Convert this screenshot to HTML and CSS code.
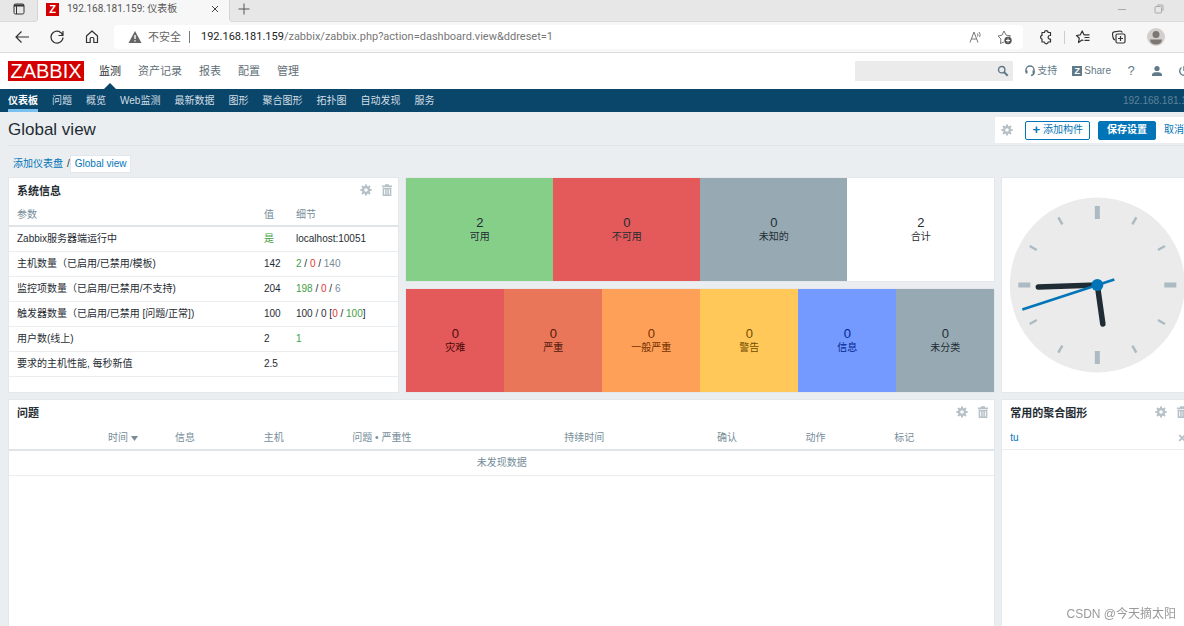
FILE: index.html
```html
<!DOCTYPE html>
<html lang="zh-CN">
<head>
<meta charset="utf-8">
<title>192.168.181.159: 仪表板</title>
<link rel="stylesheet" href="styles.css">
</head>
<body>
<svg class="defs" aria-hidden="true">
  <symbol id="gear" viewBox="0 0 12 12">
    <g fill="none" stroke="currentColor">
      <circle cx="6" cy="6" r="2.900" stroke-width="2.200"/>
      <path stroke-width="2" d="M6 0.4V2.5M6 9.5v2.1M0.4 6h2.1M9.5 6h2.1M2 2l1.6 1.6M8.4 8.4L10 10M2 10l1.6-1.6M8.4 3.6L10 2"/>
    </g>
  </symbol>
  <symbol id="trash" viewBox="0 0 12 12">
    <path fill="none" stroke="currentColor" stroke-width="1.5" d="M1 2.2h10M4 1h4M2.4 3.5v7.7h7.2V3.5M2.4 4.4h7.2M4.9 5v5.500M7.100 5v5.500"/>
  </symbol>
</svg>

<div class="browser">
  <div class="tabstrip">
    <button class="tab-actions" aria-label="标签操作">
      <svg width="12" height="12" viewBox="0 0 12 12" fill="none" stroke="#333"><rect x="1" y="1" width="10" height="10" rx="1.500"/><path stroke-width="2" d="M1 2.500h10"/><path d="M3.500 3v8"/></svg>
    </button>
    <div class="tab">
      <span class="favicon">Z</span>
      <span class="tab-title">192.168.181.159: 仪表板</span>
      <button class="tab-close" aria-label="关闭标签"><svg width="8" height="8" viewBox="0 0 8 8" stroke="#444"><path d="M1 1l6 6M7 1l-6 6"/></svg></button>
    </div>
    <button class="new-tab" aria-label="新建标签"><svg width="12" height="12" viewBox="0 0 12 12" stroke="#555"><path d="M6 0.500v11M0.500 6h11"/></svg></button>
    <div class="window-buttons">
      <button aria-label="最小化"><svg width="10" height="10" viewBox="0 0 10 10" stroke="#aaa"><path d="M1 5.500h8"/></svg></button>
      <button aria-label="还原"><svg width="10" height="10" viewBox="0 0 10 10" fill="none" stroke="#aaa"><rect x="1" y="2.500" width="6.500" height="6.500" rx="1"/><path d="M3 1h5a1 1 0 0 1 1 1v5"/></svg></button>
    </div>
  </div>
  <div class="toolbar">
    <div class="nav-buttons">
      <button aria-label="后退"><svg width="16" height="16" viewBox="0 0 16 16" fill="none" stroke="#333" stroke-width="1.200"><path d="M15 8H2M7.500 2.500L2 8l5.500 5.500"/></svg></button>
      <button aria-label="刷新"><svg width="16" height="16" viewBox="0 0 16 16" fill="none" stroke="#333" stroke-width="1.200"><path d="M13.800 6.500A6 6 0 1 0 14 8.500M14 2v4.500H9.500"/></svg></button>
      <button aria-label="主页"><svg width="16" height="16" viewBox="0 0 16 16" fill="none" stroke="#333" stroke-width="1.200" stroke-linejoin="round"><path d="M2.500 7L8 2l5.500 5v6.500h-3.700V9.500a1 1 0 0 0-1-1H7.200a1 1 0 0 0-1 1v4H2.500z"/></svg></button>
    </div>
    <div class="address">
      <svg width="14" height="14" viewBox="0 0 14 14"><path fill="#666" d="M7 1l6.500 12H.5z"/><path stroke="#fff" stroke-width="1.400" d="M7 5v4M7 10.200v1.400"/></svg>
      <span class="insecure">不安全</span>
      <span class="address-rule"></span>
      <span class="url"><b>192.168.181.159</b>/zabbix/zabbix.php?action=dashboard.view&amp;ddreset=1</span>
      <button aria-label="大声朗读"><svg width="14" height="14" viewBox="0 0 14 14" fill="none" stroke="#777"><path d="M1 12.500L5 2l4 10.500M2.500 9h5M8.500 3.500q1 1.500 0 3M10 2q2.300 2.500.5 5"/></svg></button>
      <button aria-label="收藏"><svg width="16" height="16" viewBox="0 0 16 16" fill="none" stroke="#777" stroke-linejoin="round"><path d="M7 13l-3.600 1.500.6-4.500L1 7l4-.8L7 2l2.200 4.200 4.300.6-1.500 1.500"/><circle cx="11" cy="11.500" r="3.700" fill="#555" stroke="none"/><path stroke="#fff" d="M11 9.500v4M9 11.500h4"/></svg></button>
    </div>
    <div class="tools">
      <button aria-label="扩展"><svg width="16" height="16" viewBox="0 0 16 16" fill="none" stroke="#333" stroke-width="1.200" stroke-linejoin="round"><path d="M4 3.500h2.500a1.800 1.800 0 0 1 3.600 0H12.500v3h-.6a1.800 1.800 0 0 0 0 3.600h.6V13h-2.400a1.800 1.800 0 0 1-3.600 0H4v-2.900a1.900 1.900 0 0 1 0-3.700z"/></svg></button>
      <span class="tool-rule"></span>
      <button aria-label="收藏夹"><svg width="16" height="16" viewBox="0 0 16 16" fill="none" stroke="#333" stroke-width="1.200" stroke-linejoin="round"><path d="M8.500 11.500L7 11l-3.500 2.500.8-4.300L1.500 6.500l3.800-.7L7.200 2 9 5.800h5.500M9.500 8.500h5M9.500 11.300h5"/></svg></button>
      <button aria-label="集锦"><svg width="16" height="16" viewBox="0 0 16 16" fill="none" stroke="#333" stroke-width="1.200"><rect x="5" y="5" width="9" height="9" rx="1.500"/><path d="M9.500 7v5M7 9.500h5M4 11Q2.500 10.500 2 8.500L1.500 5Q1.500 3 3.200 2.800L9 2q1.800 0 2.300 1.500"/></svg></button>
      <button aria-label="个人资料"><svg width="18" height="18" viewBox="0 0 18 18"><circle cx="9" cy="9" r="9" fill="#d2cfcd"/><circle cx="9" cy="6.500" r="3.500" fill="#7d7773"/><path fill="#7d7773" d="M3 11.500h12q-.5 5-6 5t-6-5z"/></svg></button>
    </div>
  </div>
</div>

<div class="app">
  <header class="header">
    <a class="logo" href="#">ZABBIX</a>
    <nav class="menu">
      <a class="active" href="#">监测</a><a href="#">资产记录</a><a href="#">报表</a><a href="#">配置</a><a href="#">管理</a>
    </nav>
    <form class="search">
      <input type="text" aria-label="搜索">
      <button type="button" aria-label="搜索"><svg width="12" height="12" viewBox="0 0 12 12" fill="none" stroke="#5f7a88"><circle cx="4.700" cy="4.700" r="3.200" stroke-width="1.400"/><path stroke-width="2" d="M7.200 7.200l3.500 3.500"/></svg></button>
    </form>
    <div class="user-links">
      <a href="#"><svg width="10" height="12" viewBox="0 0 10 12" fill="none" stroke="#5f7a88" stroke-width="1.400"><path d="M1 7V5a4 4 0 0 1 8 0v2.500Q9 10 6 10.500"/><path stroke-width="2" d="M1.500 5.500v3M8.500 5.500v3"/></svg>支持</a>
      <a href="#"><span class="share-icon">Z</span>Share</a>
      <a class="help" href="#">?</a>
      <a href="#" aria-label="用户"><svg width="12" height="12" viewBox="0 0 12 12" fill="#5f7a88"><circle cx="6" cy="3.500" r="2.600"/><path d="M1 11V9.200Q1.500 7.500 4 7.200h4q2.500.3 3 2V11z"/></svg></a>
      <a href="#" aria-label="退出"><svg width="12" height="12" viewBox="0 0 12 12" fill="none" stroke="#5f7a88" stroke-width="1.400"><path d="M6 1v5M3.500 2.500a4.300 4.300 0 1 0 5 0"/></svg></a>
    </div>
  </header>
  <nav class="submenu">
    <a class="active" href="#">仪表板</a><a href="#">问题</a><a href="#">概览</a><a href="#">Web监测</a><a href="#">最新数据</a><a href="#">图形</a><a href="#">聚合图形</a><a href="#">拓扑图</a><a href="#">自动发现</a><a href="#">服务</a>
    <span class="server">192.168.181.159</span>
  </nav>

  <main class="page">
    <div class="page-head">
      <h1>Global view</h1>
      <div class="controls">
        <button class="icon-button" aria-label="仪表盘设置"><svg width="12" height="12"><use href="#gear"/></svg></button>
        <button class="btn"><span class="plus">+</span> 添加构件</button>
        <button class="btn primary">保存设置</button>
        <a href="#">取消</a>
      </div>
    </div>
    <div class="crumbs"><a href="#">添加仪表盘</a><span>/</span><a class="current" href="#">Global view</a></div>

    <div class="dashboard">
      <section class="widget system">
        <div class="widget-head"><h2>系统信息</h2>
          <div class="actions"><button class="icon-button" aria-label="编辑"><svg width="12" height="12"><use href="#gear"/></svg></button><button class="icon-button" aria-label="删除"><svg width="12" height="12"><use href="#trash"/></svg></button></div>
        </div>
        <table class="system-table">
          <colgroup><col class="w-param"><col class="w-value"><col></colgroup>
          <thead><tr><th>参数</th><th>值</th><th>细节</th></tr></thead>
          <tbody>
            <tr><td>Zabbix服务器端运行中</td><td class="green">是</td><td>localhost:10051</td></tr>
            <tr><td>主机数量（已启用/已禁用/模板)</td><td>142</td><td><span class="green">2</span> / <span class="red">0</span> / <span class="grey">140</span></td></tr>
            <tr><td>监控项数量（已启用/已禁用/不支持)</td><td>204</td><td><span class="green">198</span> / <span class="red">0</span> / <span class="grey">6</span></td></tr>
            <tr><td>触发器数量（已启用/已禁用 [问题/正常])</td><td>100</td><td>100 / 0 [<span class="red">0</span> / <span class="green">100</span>]</td></tr>
            <tr><td>用户数(线上)</td><td>2</td><td class="green">1</td></tr>
            <tr><td>要求的主机性能, 每秒新值</td><td>2.5</td><td></td></tr>
          </tbody>
        </table>
      </section>

      <section class="widget tiles">
        <div class="tile ok"><strong>2</strong><span>可用</span></div>
        <div class="tile down"><strong>0</strong><span>不可用</span></div>
        <div class="tile unknown"><strong>0</strong><span>未知的</span></div>
        <div class="tile"><strong>2</strong><span>合计</span></div>
      </section>

      <section class="widget clock">
        <svg viewBox="-88 -88 176 176" role="img" aria-label="时钟">
          <circle r="87.500" fill="#ebebeb"/>
          <g stroke="#acbbc2">
            <path stroke-width="5" d="M0-79v13M0 79V66M-79 0h12M79 0H67"/>
            <path stroke-width="2.500" d="M39-67.600l-4 7M67.600-39l-7 4M67.600 39l-7-4M39 67.600l-4-7M-39 67.600l4-7M-67.600 39l7-4M-67.600-39l7 4M-39-67.600l4 7"/>
          </g>
          <path stroke="#1f2c33" stroke-width="5.500" stroke-linecap="round" d="M0 0L-59 2M0 0L5.500 39"/>
          <path stroke="#0275b8" stroke-width="2.500" d="M17-5.500L-75 24.500"/>
          <circle r="6" fill="#0275b8"/>
        </svg>
      </section>

      <section class="widget tiles">
        <div class="tile disaster"><strong>0</strong><span>灾难</span></div>
        <div class="tile high"><strong>0</strong><span>严重</span></div>
        <div class="tile average"><strong>0</strong><span>一般严重</span></div>
        <div class="tile warning"><strong>0</strong><span>警告</span></div>
        <div class="tile info"><strong>0</strong><span>信息</span></div>
        <div class="tile none"><strong>0</strong><span>未分类</span></div>
      </section>

      <section class="widget problems">
        <div class="widget-head"><h2>问题</h2>
          <div class="actions"><button class="icon-button" aria-label="编辑"><svg width="12" height="12"><use href="#gear"/></svg></button><button class="icon-button" aria-label="删除"><svg width="12" height="12"><use href="#trash"/></svg></button></div>
        </div>
        <table class="problem-table">
          <colgroup><col class="p-lead"><col class="p-time"><col class="p-std"><col class="p-std"><col class="p-problem"><col class="p-duration"><col class="p-std"><col class="p-std"><col></colgroup>
          <thead><tr><th></th><th>时间 <svg width="7" height="5" viewBox="0 0 7 5"><path fill="#768d99" d="M0 0h7L3.500 5z"/></svg></th><th>信息</th><th>主机</th><th>问题 • 严重性</th><th>持续时间</th><th>确认</th><th>动作</th><th>标记</th></tr></thead>
          <tbody><tr><td class="nodata" colspan="9">未发现数据</td></tr></tbody>
        </table>
      </section>

      <section class="widget screens">
        <div class="widget-head"><h2>常用的聚合图形</h2>
          <div class="actions"><button class="icon-button" aria-label="编辑"><svg width="12" height="12"><use href="#gear"/></svg></button><button class="icon-button" aria-label="删除"><svg width="12" height="12"><use href="#trash"/></svg></button></div>
        </div>
        <div class="favourite"><a href="#">tu</a><button class="icon-button" aria-label="移除"><svg width="8" height="8" viewBox="0 0 8 8" stroke="currentColor" stroke-width="1.800"><path d="M1.200 1.200l5.600 5.600M6.800 1.200L1.200 6.800"/></svg></button></div>
      </section>
    </div>
  </main>
</div>
<div class="watermark">CSDN @今天摘太阳</div>
</body>
</html>
```

FILE: styles.css
```css
* { box-sizing: border-box; }
html, body { height: 100%; }
body {
  margin: 0;
  display: flex;
  flex-direction: column;
  overflow: hidden;
  background: #ebeef0;
  color: #1f2c33;
  font: 10px/14px "Liberation Sans", "Noto Sans CJK SC", sans-serif;
}
a { color: #0275b8; text-decoration: none; }
button { padding: 0; border: 0; background: none; font: inherit; color: inherit; display: flex; align-items: center; justify-content: center; }
svg { flex: none; }
.defs { position: absolute; width: 0; height: 0; }

/* Browser frame */
.browser { flex: none; font-family: "Open Sans", "Noto Sans CJK SC", sans-serif; background: #f7f7f7; border-bottom: 1px solid #dcdcdc; }
.tabstrip { display: flex; height: 22px; background: #f7f7f7; }
.tab-actions { width: 38px; padding-bottom: 4px; background: #e7e7e7; border-right: 1px solid #d4d4d4; border-bottom: 1px solid #dadada; border-radius: 0 0 4px 0; }
.tab { display: flex; align-items: center; width: 191px; padding: 0 10px 4px 8px; }
.favicon { width: 13px; height: 13px; margin-right: 8px; background: #d40000; color: #fff; font: bold 11px/13px "Liberation Sans", sans-serif; text-align: center; }
.tab-title { flex: 1; font-family: Roboto, "Noto Sans CJK SC", sans-serif; font-size: 10px; line-height: 12px; color: #555; white-space: nowrap; }
.new-tab { width: 28px; padding-bottom: 4px; background: #e7e7e7; border-left: 1px solid #d4d4d4; border-bottom: 1px solid #dadada; border-radius: 0 0 0 4px; }
.window-buttons { flex: 1; display: flex; justify-content: flex-end; gap: 27px; padding: 0 20px 4px 0; background: #e7e7e7; border-bottom: 1px solid #dadada; }
.toolbar { display: flex; align-items: center; height: 30px; padding: 0 19px 0 14px; }
.nav-buttons { display: flex; gap: 19px; }
.address { flex: 1; display: flex; align-items: center; height: 24px; margin: 0 15px 0 14px; padding: 0 10px 0 14px; background: #fff; border-radius: 4px; color: #777; font-size: 11px; white-space: nowrap; }
.insecure { margin-left: 6px; color: #666; }
.address-rule { width: 1px; height: 12px; margin: 0 11px 0 8px; background: #777; }
.url { flex: 1; font-family: Roboto, sans-serif; }
.url b { font-weight: 400; color: #222; }
.address button + button { margin-left: 14px; }
.tools { display: flex; align-items: center; gap: 20px; }
.tool-rule { width: 1px; height: 13px; margin: 0 -10px; background: #ccc; }

/* Application header */
.app { flex: 1; display: flex; flex-direction: column; min-height: 0; width: calc(100% + 18px); }
.header { display: flex; align-items: center; height: 36px; padding: 0 12px 0 8px; background: #fff; }
.logo { width: 76px; height: 20px; background: #d40000; color: #fff; font-size: 20px; line-height: 21px; text-align: center; }
.menu { display: flex; gap: 17px; align-self: stretch; margin-left: 15px; font-size: 11px; }
.menu a { display: flex; align-items: center; color: #5f6f78; }
.menu a.active { position: relative; color: #1f2c33; }
.menu a.active::after { content: ""; position: absolute; left: 50%; bottom: 0; margin-left: -6px; border: 6px solid transparent; border-top: 0; border-bottom-color: #0a466a; }
.search { display: flex; width: 158px; height: 20px; margin-left: auto; background: #ebebeb; }
.search input { flex: 1; min-width: 0; border: 0; background: transparent; font: inherit; }
.search button { width: 20px; }
.user-links { display: flex; align-items: center; margin-left: 12px; gap: 15px; }
.user-links a { display: flex; align-items: center; gap: 2px; color: #5f7a88; }
.user-links .help { width: 10px; justify-content: center; font-size: 13px; }
.share-icon { width: 10px; height: 10px; background: #5f7a88; color: #fff; font-size: 9px; font-weight: bold; line-height: 10px; text-align: center; }
.submenu { display: flex; gap: 15px; height: 23px; padding: 0 4px 0 8px; background: #0a466a; }
.submenu a { display: flex; align-items: center; color: #d2dee5; border-bottom: 3px solid transparent; border-top: 3px solid transparent; }
.submenu { gap: 14px; }
.submenu a.active { color: #fff; font-weight: bold; border-bottom-color: #7ac1f0; }
.server { margin-left: auto; line-height: 23px; color: #5d8299; }

/* Page heading */
.page { flex: 1; display: flex; flex-direction: column; min-height: 0; padding: 0 9px; }
.page-head { display: flex; align-items: center; justify-content: space-between; height: 34px; margin: 0 -9px 0 -1px; padding-top: 3px; border-bottom: 1px solid #dfe4e7; }
h1 { margin: 0; font-size: 17px; font-weight: 400; line-height: 24px; }
.controls { display: flex; align-items: center; height: 26px; padding: 0 18px 0 6px; background: #fff; }
.icon-button { color: #b5c0c7; }
.btn { height: 19px; margin-left: 12px; padding: 0 6px; gap: 3px; border: 1px solid #0275b8; border-radius: 2px; background: #fff; color: #0275b8; }
.plus { font-size: 13px; font-weight: bold; }
.btn.primary { margin: 0 8px; padding: 0 8px; background: #0275b8; color: #fff; font-weight: bold; }
.crumbs { display: flex; align-items: center; height: 32px; padding: 3px 0 0 4px; }
.crumbs span { margin-left: 4px; }
.crumbs .current { padding: 1px 4px; background: #fff; border: 1px solid #e3e7e9; }

/* Dashboard */
.dashboard { flex: 1; min-height: 0; display: grid; grid-template-columns: repeat(12, minmax(0, 1fr)); grid-template-rows: 103px 103px 1fr; gap: 8px; }
.widget { background: #fff; box-shadow: 0 0 0 1px #e4e8ea; }
.system { grid-column: span 4; grid-row: span 2; }
.tiles { grid-column: span 6; display: flex; }
.clock { grid-column: span 2; grid-row: span 2; display: flex; align-items: center; justify-content: center; padding: 0 7px; }
.clock svg { width: 100%; max-height: 176px; }
.problems { grid-column: span 10; }
.screens { grid-column: span 2; }
.widget-head { display: flex; justify-content: space-between; height: 24px; padding: 0 5px 0 8px; }
h2 { margin: 0; font-size: 11px; line-height: 26px; }
.actions { display: flex; gap: 9px; align-items: center; }
table { width: 100%; border-collapse: collapse; table-layout: fixed; }
th, td { height: 25px; padding: 0; text-align: left; font-weight: 400; border-bottom: 1px solid #ebeef0; white-space: nowrap; }
th { padding-top: 3px; color: #768d99; border-bottom: 2px solid #dfe4e7; }
.system-table th, .system-table td { padding-left: 8px; }
.system-table th { height: 24px; }
.w-param { width: 247px; }
.w-value { width: 32px; }
.green { color: #429e47; }
.red { color: #e33734; }
.grey { color: #768d99; }
.problem-table th { padding-left: 4px; height: 26px; }
.p-lead { width: 95px; }
.p-time { width: 67px; }
.p-std { width: 9%; }
.p-problem { width: 21.5%; }
.p-duration { width: 15.5%; }
.problem-table .nodata { text-align: center; color: #768d99; }
.tile { flex: 1; display: flex; flex-direction: column; align-items: center; justify-content: center; }
.tile strong { font-size: 13px; font-weight: 400; line-height: 15px; }
.ok { background: #86cf89; }
.down { background: #e45959; }
.unknown, .none { background: #97aab3; }
.disaster { background: #e45959; color: #4b0c0c; }
.high { background: #e97659; color: #52190b; }
.average { background: #ffa059; color: #733100; }
.warning { background: #ffc859; color: #734d00; }
.info { background: #7499ff; color: #00268e; }
.favourite { display: flex; align-items: center; justify-content: space-between; height: 26px; padding: 2px 7px 0 8px; border-bottom: 1px solid #ebeef0; }
.watermark { position: fixed; right: 8px; bottom: 4px; font-size: 12px; line-height: 16px; color: #999; }
```
